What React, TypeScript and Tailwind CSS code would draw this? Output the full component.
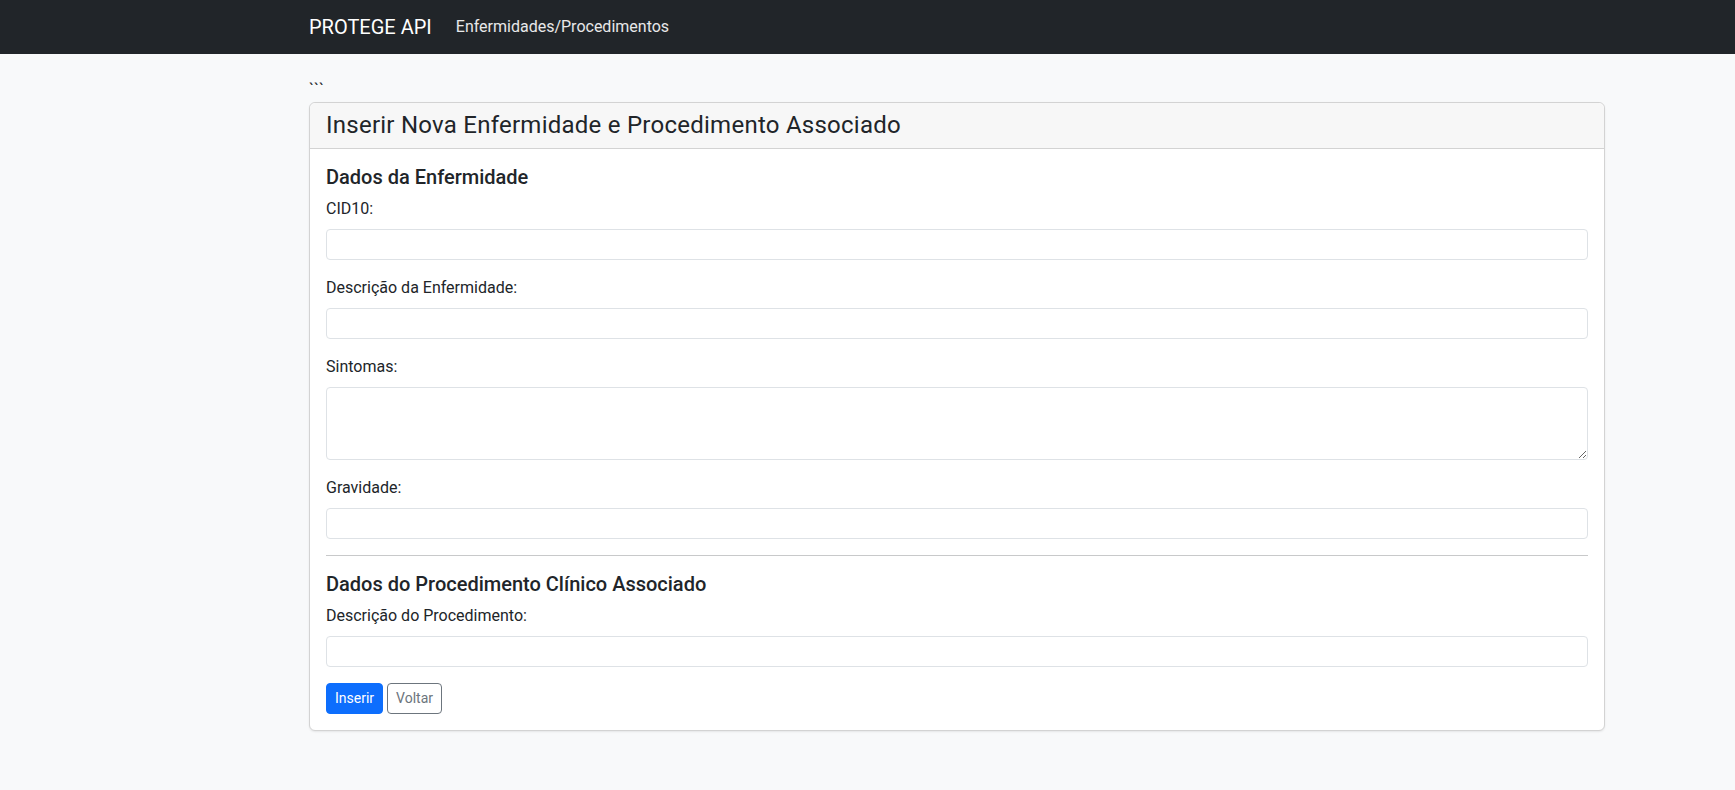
import React from 'react'

const font = { fontFamily: 'Roboto, "Noto Sans", sans-serif' }

function Field({ label, area = false, last = false }: { label: string; area?: boolean; last?: boolean }) {
  return (
    <div className={last ? '' : 'mb-4'}>
      <label className="block text-[16px] leading-6 mb-2 text-[#212529]">{label}</label>
      {area ? (
        <textarea
          rows={3}
          className="block w-full h-[73px] rounded-[4px] border border-[#dee2e6] bg-white px-2 py-1 text-[14px] leading-[21px] outline-none"
        />
      ) : (
        <input
          type="text"
          className="block w-full h-[31px] rounded-[4px] border border-[#dee2e6] bg-white px-2 py-1 text-[14px] leading-[21px] outline-none"
        />
      )}
    </div>
  )
}

export default function App() {
  return (
    <div className="min-h-[790px] bg-[#f8f9fa] text-[#212529]" style={font}>
      <nav className="h-[54px] bg-[#212529]">
        <div className="ml-[309px] w-[1296px] h-full flex items-center">
          <span className="text-[20px] leading-[30px] text-white mr-4">PROTEGE API</span>
          <span className="text-[16px] leading-6 text-white/90 px-2">Enfermidades/Procedimentos</span>
        </div>
      </nav>

      <div className="ml-[309px] w-[1296px] pt-6">
        <div className="text-[16px] leading-6">```</div>
        <div className="rounded-[6px] border border-[#d3d3d3] bg-white shadow-[0_1px_2px_rgba(0,0,0,0.08)]">
          <div className="rounded-t-[6px] border-b border-[#d3d3d3] bg-[#f7f7f7] px-4 py-2">
            <h4 className="text-[24px] leading-[29px] font-normal tracking-[0.25px]">
              Inserir Nova Enfermidade e Procedimento Associado
            </h4>
          </div>
          <div className="p-4">
            <h5 className="text-[20px] leading-6 font-medium mb-2">Dados da Enfermidade</h5>
            <Field label="CID10:" />
            <Field label="Descrição da Enfermidade:" />
            <Field label="Sintomas:" area />
            <Field label="Gravidade:" />
            <hr className="border-t border-[#c8c9ca] mb-4" />
            <h5 className="text-[20px] leading-6 font-medium mb-2">Dados do Procedimento Clínico Associado</h5>
            <Field label="Descrição do Procedimento:" />
            <div className="flex gap-1">
              <button className="h-[31px] px-2 rounded-[4px] bg-[#0d6efd] border border-[#0d6efd] text-white text-[14px] leading-[21px]">
                Inserir
              </button>
              <button className="h-[31px] px-2 rounded-[4px] bg-transparent border border-[#6c757d] text-[#6c757d] text-[14px] leading-[21px]">
                Voltar
              </button>
            </div>
          </div>
        </div>
      </div>
    </div>
  )
}
